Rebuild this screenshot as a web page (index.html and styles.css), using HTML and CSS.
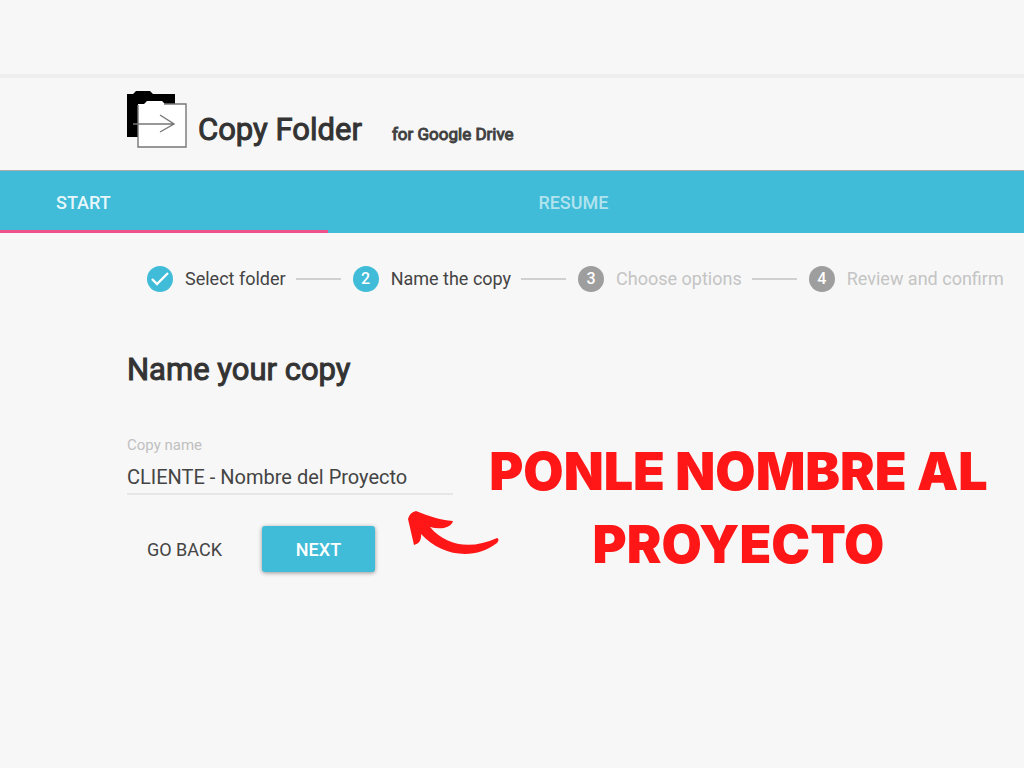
FILE: index.html
```html
<!DOCTYPE html>
<html lang="es">
<head>
    <meta charset="UTF-8">
    <meta name="viewport" content="width=device-width, initial-scale=1.0">
    <title>Copy Folder</title>
    <link rel="stylesheet" href="styles.css">
</head>
<body>
    <header class="header">
        <svg class="logo" viewBox="0 0 62 60" aria-hidden="true">
            <path d="M1 4h6l3-3h14l3 3h22v43H1z" fill="#000"/>
            <path d="M12 14h6l3-3h15l3 3h21v43H12z" fill="#fff"/>
            <path d="M38 14h22v43H12V15" fill="none" stroke="#777" stroke-width="1.4"/>
            <path d="M7 34h40M34 25l14 9-14 8" fill="none" stroke="#777" stroke-width="1.4"/>
        </svg>
        <h1>Copy Folder</h1>
        <span class="subtitle">for Google Drive</span>
    </header>

    <nav class="tabs">
        <a href="#start" class="tab active">START</a>
        <a href="#resume" class="tab">RESUME</a>
    </nav>

    <main>
        <ol class="stepper">
            <li class="step done">
                <svg class="circle" viewBox="0 0 26 26" aria-hidden="true">
                    <path d="M5 13l5 5 11-11" fill="none" stroke="#fff" stroke-width="2.4"/>
                </svg>
                <span>Select folder</span>
            </li>
            <li class="step current"><span class="circle">2</span><span>Name the copy</span></li>
            <li class="step"><span class="circle">3</span><span>Choose options</span></li>
            <li class="step"><span class="circle">4</span><span>Review and confirm</span></li>
        </ol>

        <h2>Name your copy</h2>

        <div class="content">
            <form class="copy-form">
                <label for="copyName">Copy name</label>
                <input type="text" id="copyName" name="copyName" value="CLIENTE - Nombre del Proyecto">
                <div class="actions">
                    <button type="button" class="btn">GO BACK</button>
                    <button type="submit" class="btn btn-primary">NEXT</button>
                </div>
            </form>

            <div class="callout">
                <svg class="arrow" viewBox="0 0 92 44" aria-hidden="true">
                    <path d="M1 9Q3 2 9 1C21 6 33 10 46 11Q45 16 37 18Q30 19 23 17C39 36 64 40 90 28Q93 29 90 33C67 51 34 46 14 24Q15 33 7 35Z" fill="#ff1616"/>
                </svg>
                <p>PONLE NOMBRE AL PROYECTO</p>
            </div>
        </div>
    </main>
</body>
</html>
```

FILE: styles.css
```css
* {
    box-sizing: border-box;
}
body {
    font-family: Roboto, 'Liberation Sans', sans-serif;
    background-color: #f7f7f7;
    margin: 0;
    padding-top: 74px;
    color: #333;
}
h1, h2, p {
    margin: 0;
}
.header {
    display: flex;
    align-items: baseline;
    height: 97px;
    padding: 12px 126px 0;
    border-top: 4px solid #eee;
    border-bottom: 1px solid #aaa;
}
.logo {
    width: 62px;
    height: 60px;
    margin-right: 10px;
    align-self: flex-start;
}
h1, h2 {
    font-size: 31px;
    font-weight: 400;
    -webkit-text-stroke: 1px #333;
}
h1 {
    line-height: 56px;
    margin-top: 12px;
}
.subtitle {
    font-size: 17px;
    -webkit-text-stroke: 1px #444;
    margin-left: 30px;
}

/* Tabs */
.tabs {
    display: grid;
    grid-template-columns: 32% 48%;
    background-color: #40bcd8;
}
.tab {
    height: 62px;
    line-height: 64px;
    font-size: 18px;
    font-weight: 500;
    text-align: center;
    text-decoration: none;
    color: rgba(255,255,255,0.6);
}
.tab.active {
    color: rgba(255,255,255,0.9);
    text-align: left;
    padding-left: 56px;
    border-bottom: 3px solid #f0508c;
}
main {
    padding: 32px 22px 40px 127px;
}

/* Stepper */
.stepper {
    display: flex;
    list-style: none;
    margin: 0;
    padding: 0 0 0 20px;
}
.step {
    display: flex;
    align-items: center;
    gap: 12px;
    font-size: 18px;
    line-height: 28px;
    white-space: nowrap;
    color: #c4c4c4;
}
.step + .step::before {
    content: "";
    width: 45px;
    margin-left: 10px;
    border-top: 2px solid #d0d0d0;
}
.circle {
    width: 26px;
    height: 26px;
    border-radius: 50%;
    background-color: #9e9e9e;
    color: #fff;
    font-size: 16px;
    line-height: 26px;
    font-weight: 500;
    text-align: center;
}
.done, .current {
    color: #444;
}
.done .circle, .current .circle {
    background-color: #40bcd8;
}
h2 {
    line-height: 40px;
    margin-top: 57px;
}

/* Form and callout */
.content {
    display: grid;
    grid-template-columns: 326px 1fr;
    gap: 22px;
    margin-top: 45px;
}
label {
    display: block;
    font-size: 15px;
    line-height: 20px;
    color: #c0c0c0;
}
input[type="text"] {
    width: 100%;
    height: 40px;
    padding: 8px 0 2px;
    border: none;
    border-bottom: 2px solid #e6e6e6;
    background: none;
    font: inherit;
    font-size: 20px;
    color: #444;
}
.actions {
    display: flex;
    gap: 20px;
    margin-top: 31px;
}
.btn {
    height: 46px;
    padding: 0 20px;
    border: none;
    border-radius: 3px;
    background: none;
    font: inherit;
    font-size: 18px;
    color: #444;
    cursor: pointer;
}
.btn-primary {
    min-width: 113px;
    background-color: #40bcd8;
    color: #fff;
    font-weight: 500;
    box-shadow: 0 1px 4px rgba(0,0,0,0.4);
}
.callout {
    position: relative;
}
.callout p {
    font-family: Inter, sans-serif;
    font-size: 52px;
    line-height: 73px;
    font-weight: 900;
    text-align: center;
    color: #ff1616;
}
/* The arrow points back over the form */
.arrow {
    position: absolute;
    left: -68px;
    top: 75px;
    width: 92px;
    height: 44px;
}
```
